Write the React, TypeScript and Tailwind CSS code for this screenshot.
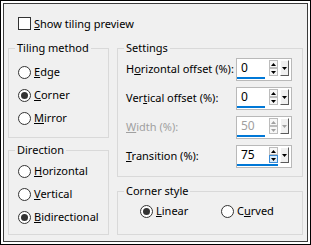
import React from "react";

const font = { fontFamily: '"Noto Sans", "Open Sans", sans-serif' };

function Radio({ checked, label, disabled }: { checked?: boolean; label: React.ReactNode; disabled?: boolean }) {
  return (
    <div className="flex items-center h-[16px]">
      <div className="w-[13px] h-[13px] rounded-full border border-[#333333] bg-white flex items-center justify-center shrink-0">
        {checked && <div className="w-[7px] h-[7px] rounded-full bg-[#333333]" />}
      </div>
      <span className={`ml-[3px] leading-[16px] whitespace-nowrap ${disabled ? "text-[#a0a0a0]" : "text-black"}`}>{label}</span>
    </div>
  );
}

function Up({ c }: { c: string }) {
  return (
    <svg width="5" height="3" viewBox="0 0 5 3">
      <path d="M2.5 0 L5 3 L0 3 Z" fill={c} />
    </svg>
  );
}
function Down({ c }: { c: string }) {
  return (
    <svg width="5" height="3" viewBox="0 0 5 3">
      <path d="M0 0 L5 0 L2.5 3 Z" fill={c} />
    </svg>
  );
}

function Spin({ value, disabled, active }: { value: string; disabled?: boolean; active?: boolean }) {
  const arrow = disabled ? "#a0a0a0" : "#000000";
  return (
    <div className="w-[56px] h-[23px] border border-[#b9b9b9] bg-white flex shrink-0">
      <div className="flex flex-col w-[41px]">
        <div className="flex flex-1">
          <div className={`w-[28px] pl-[4px] flex items-center leading-none text-[12px] ${disabled ? "text-[#a0a0a0]" : "text-black"}`}>
            {value}
          </div>
          <div className="ml-[4px] mt-[1px] flex flex-col w-[9px]">
            <div className="h-[8px] border border-[#bcbcbc] bg-[#f7f7f7] flex items-center justify-center">
              <Up c={arrow} />
            </div>
            <div
              className={`h-[8px] border flex items-center justify-center ${
                active ? "border-[#3c8cd6] bg-[#dbecfa]" : "border-[#bcbcbc] bg-[#f7f7f7]"
              }`}
            >
              <Down c={arrow} />
            </div>
          </div>
        </div>
        <div className={`${active ? "w-[41px]" : "w-[28px]"} h-[2px] bg-[#0078d7] mb-[1px]`} />
      </div>
      <div className="ml-[2px] mt-[1px] w-[9px] h-[16px] bg-[#f0f0f0] border-t border-l border-t-white border-l-white border-r border-b border-r-[#5a5a5a] border-b-[#5a5a5a] flex items-center justify-center">
        <Down c={arrow} />
      </div>
    </div>
  );
}

function Group({ title, className, children }: { title: string; className: string; children: React.ReactNode }) {
  return (
    <fieldset className={`border border-[#d9d9d9] ${className}`}>
      <legend className="ml-[6px] px-[2px] leading-[16px] text-black">{title}</legend>
      {children}
    </fieldset>
  );
}

function Row({ label, value, disabled, active }: { label: React.ReactNode; value: string; disabled?: boolean; active?: boolean }) {
  return (
    <div className="flex items-center justify-between h-[23px]">
      <span className={`whitespace-nowrap ${disabled ? "text-[#a0a0a0]" : "text-black"}`}>{label}</span>
      <Spin value={value} disabled={disabled} active={active} />
    </div>
  );
}

export default function App() {
  return (
    <div className="w-[311px] h-[245px] border border-black bg-white p-[2px] text-[11px]" style={font}>
      <div className="h-full border border-[#3c3c3c] bg-[#f0f0f0] px-[4px] flex flex-col">
        <div className="mt-[13px] ml-[10px] h-[13px] flex items-center">
          <div className="w-[13px] h-[13px] border border-[#333333] bg-white shrink-0" />
          <span className="ml-[3px] leading-[16px] text-black whitespace-nowrap">
            <u>S</u>how tiling preview
          </span>
        </div>
        <div className="mt-[10px] flex gap-[8px]">
          <div className="w-[101px] flex flex-col">
            <Group title="Tiling method" className="h-[98px]">
              <div className="pl-[9px] pt-[8px] flex flex-col gap-[7px]">
                <Radio label={<><u>E</u>dge</>} />
                <Radio checked label={<><u>C</u>orner</>} />
                <Radio label={<><u>M</u>irror</>} />
              </div>
            </Group>
            <Group title="Direction" className="mt-[4px] h-[93px]">
              <div className="pl-[9px] pt-[5px] flex flex-col gap-[7px]">
                <Radio label={<><u>H</u>orizontal</>} />
                <Radio label={<><u>V</u>ertical</>} />
                <Radio checked label={<><u>B</u>idirectional</>} />
              </div>
            </Group>
          </div>
          <div className="w-[186px] flex flex-col">
            <Group title="Settings" className="h-[137px]">
              <div className="pl-[8px] pr-[10px] pt-[2px] flex flex-col gap-[6px]">
                <Row label={<>H<u>o</u>rizontal offset (%):</>} value="0" />
                <Row label={<>Ver<u>t</u>ical offset (%):</>} value="0" />
                <Row label={<><u>W</u>idth (%):</>} value="50" disabled />
                <Row label={<><u>T</u>ransition (%):</>} value="75" active />
              </div>
            </Group>
            <Group title="Corner style" className="mt-[6px] h-[52px]">
              <div className="pl-[22px] pt-[4px] flex">
                <div className="w-[81px]">
                  <Radio checked label={<><u>L</u>inear</>} />
                </div>
                <Radio label={<>C<u>u</u>rved</>} />
              </div>
            </Group>
          </div>
        </div>
      </div>
    </div>
  );
}
